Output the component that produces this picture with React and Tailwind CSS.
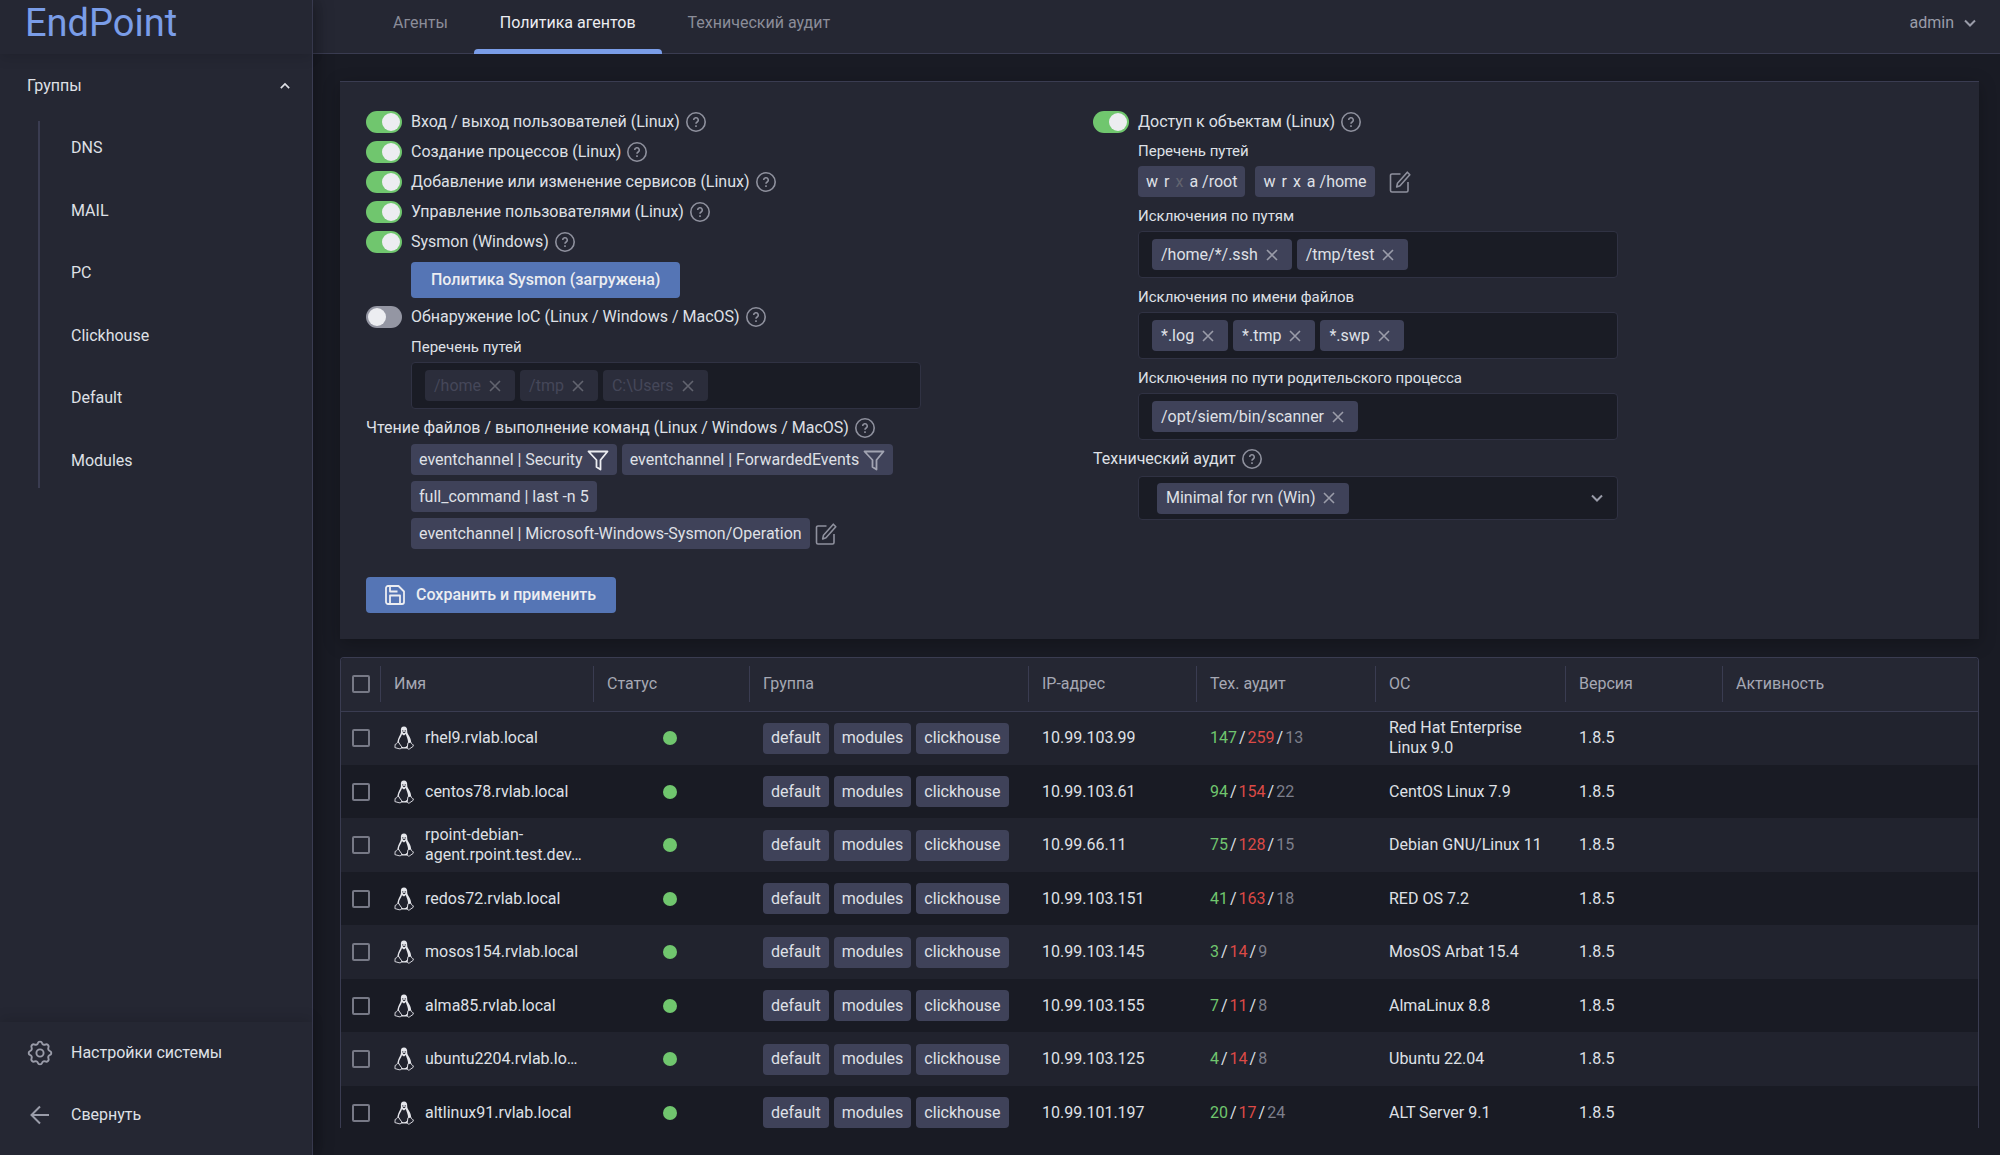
import { useState } from 'react'

const groups = ['DNS', 'MAIL', 'PC', 'Clickhouse', 'Default', 'Modules']

const tabs = ['Агенты', 'Политика агентов', 'Технический аудит']

const leftToggles = [
    'Вход / выход пользователей (Linux)',
    'Создание процессов (Linux)',
    'Добавление или изменение сервисов (Linux)',
    'Управление пользователями (Linux)',
    'Sysmon (Windows)'
]

const columns = ['Имя', 'Статус', 'Группа', 'IP-адрес', 'Тех. аудит', 'ОС', 'Версия', 'Активность']

const agents = [
    { name: 'rhel9.rvlab.local', ip: '10.99.103.99', audit: [147, 259, 13], os: 'Red Hat Enterprise Linux 9.0' },
    { name: 'centos78.rvlab.local', ip: '10.99.103.61', audit: [94, 154, 22], os: 'CentOS Linux 7.9' },
    { name: 'rpoint-debian-agent.rpoint.test.dev…', ip: '10.99.66.11', audit: [75, 128, 15], os: 'Debian GNU/Linux 11' },
    { name: 'redos72.rvlab.local', ip: '10.99.103.151', audit: [41, 163, 18], os: 'RED OS 7.2' },
    { name: 'mosos154.rvlab.local', ip: '10.99.103.145', audit: [3, 14, 9], os: 'MosOS Arbat 15.4' },
    { name: 'alma85.rvlab.local', ip: '10.99.103.155', audit: [7, 11, 8], os: 'AlmaLinux 8.8' },
    { name: 'ubuntu2204.rvlab.lo…', ip: '10.99.103.125', audit: [4, 14, 8], os: 'Ubuntu 22.04' },
    { name: 'altlinux91.rvlab.local', ip: '10.99.101.197', audit: [20, 17, 24], os: 'ALT Server 9.1' }
]

function Chevron({ up }) {
    return (
        <svg className={up === undefined ? 'h-3 w-3' : up ? 'h-2.5 w-2.5 rotate-180' : 'h-2.5 w-2.5'} viewBox="0 0 12 12" fill="none" stroke="currentColor" strokeWidth="2">
            <path d="M1 3.5l5 5 5-5" />
        </svg>
    )
}

function CrossIcon() {
    return (
        <svg className="h-3 w-3" viewBox="0 0 12 12" fill="none" stroke="currentColor" strokeWidth="1.6">
            <path d="M1 1l10 10M11 1L1 11" />
        </svg>
    )
}

function HelpIcon() {
    return (
        <button type="button" aria-label="Справка" className="text-[#8f919e]">
            <svg className="h-5 w-5" viewBox="0 0 20 20" fill="none" stroke="currentColor" strokeWidth="1.6">
                <circle cx="10" cy="10" r="9.2" />
                <path d="M7.7 8.1a2.3 2.3 0 1 1 3.5 1.9c-.8.5-1.2.9-1.2 1.8" />
                <path d="M10 13.2v1.8" />
            </svg>
        </button>
    )
}

function EditIcon() {
    return (
        <button type="button" aria-label="Изменить" className="text-[#8f919e]">
            <svg className="h-[22px] w-[22px]" viewBox="0 0 22 22" fill="none" stroke="currentColor" strokeWidth="1.6" strokeLinejoin="round">
                <path d="M11.5 3H3a1.5 1.5 0 0 0-1.5 1.5v15A1.5 1.5 0 0 0 3 21h14.5a1.5 1.5 0 0 0 1.5-1.5V11" />
                <path d="M18.3 1.2l2.5 2.5-9.8 11-3.3 1.3.8-3.8z" />
            </svg>
        </button>
    )
}

function FilterIcon({ active }) {
    return (
        <svg className={active ? 'h-[22px] w-[22px] text-[#ecedf1]' : 'h-[22px] w-[22px] text-[#a2a4b2]'} viewBox="0 0 22 22" fill="none" stroke="currentColor" strokeWidth="1.8" strokeLinejoin="round">
            <path d="M1.5 2.5h19l-7 8.5v9.5l-4-2.5v-7z" />
        </svg>
    )
}

function Tux() {
    return (
        <svg className="h-6 w-5 shrink-0" viewBox="0 0 20 24">
            <path fill="#e6e7ec" d="M6.9 5C6.6 2 7.8.6 10 .6s3.400 1.600 3.200 4.300c-.1 2 1 3.200 2.200 5.500 1.100 2.100 2 4.400 1.700 7.300l-2 4.800H5L3.600 16.500c-.3-2.800 1.400-5.400 2.500-7.700.7-1.600.9-2.300.8-3.800z" />
            <path fill="#20222d" d="M8 8.300l2 1.200 1.800-1.500c.7 2.400 2.300 5.500 2.300 8.500 0 3-1.900 4.800-4.300 4.800-1.900 0-3-1-4-3l-.9-2.500c.1-3 2.200-4.800 3.100-7.500z" />
            <path fill="#20222d" d="M8.300 4.200h1v1.200h-1zM10.700 4.200h1v1.200h-1zM8.600 6.300l1.400-.5 1.700.5L10 7.300z" />
            <path fill="#20222d" stroke="#e6e7ec" strokeWidth=".9" strokeLinejoin="round" d="M4 15.700l3.500 4.800c.3 1.500-.7 2.500-2.200 2.300L.9 21.600l.3-3.300c1.600 0 1.900-1.600 2.800-2.600zM13.900 16.800l3-.7c.2 1.500 1 2.100 2.400 2.700l-.2 1.600-3.600 2.500c-1.200.6-2.200 0-2.200-1.500z" />
        </svg>
    )
}

function GearIcon() {
    return (
        <svg className="h-[26px] w-[26px]" viewBox="0 0 26 26" fill="none" stroke="currentColor" strokeWidth="1.9" strokeLinejoin="round">
            <path d="M10.8 3.3a2.300 2.300 0 0 1 4.400 0 2.300 2.300 0 0 0 3.100 1.300 2.300 2.300 0 0 1 3.100 3.100 2.300 2.300 0 0 0 1.300 3.100 2.300 2.300 0 0 1 0 4.400 2.300 2.300 0 0 0-1.300 3.100 2.300 2.300 0 0 1-3.100 3.100 2.300 2.300 0 0 0-3.100 1.300 2.300 2.300 0 0 1-4.400 0 2.300 2.300 0 0 0-3.100-1.300 2.300 2.300 0 0 1-3.100-3.100 2.300 2.300 0 0 0-1.300-3.100 2.300 2.300 0 0 1 0-4.400 2.300 2.300 0 0 0 1.300-3.100 2.300 2.300 0 0 1 3.100-3.100 2.300 2.300 0 0 0 3.100-1.300z" />
            <circle cx="13" cy="13" r="3.6" />
        </svg>
    )
}

function Toggle({ label, defaultChecked = true }) {
    return (
        <div className="flex h-[30px] items-center gap-1.5">
            <label className="flex items-center gap-[9px]">
                <input type="checkbox" role="switch" defaultChecked={defaultChecked} className="peer sr-only" />
                <span className="flex h-[22px] w-9 items-center rounded-full bg-[#9496a3] p-0.5 peer-checked:justify-end peer-checked:bg-[#70c66e]">
                    <span className="h-[18px] w-[18px] rounded-full bg-[#ecedf1]"></span>
                </span>
                {label}
            </label>
            <HelpIcon />
        </div>
    )
}

function Tag({ children }) {
    return <span className="flex h-[31px] items-center gap-1 rounded bg-[#3f4259] px-2">{children}</span>
}

function ChipField({ id, items, disabled }) {
    return (
        <div className="flex h-[47px] items-center gap-[5px] rounded-sm border border-[#303243] bg-[#1a1c25] px-[13px]">
            {items.map(item => (
                <span
                    key={item}
                    className={`flex h-[31px] items-center gap-2 rounded pr-3.5 pl-[9px] ${disabled ? 'bg-[#2b2d3b] text-[#454759]' : 'bg-[#3f4259]'}`}
                >
                    {item}
                    <button type="button" disabled={disabled} aria-label={`Удалить ${item}`} className={disabled ? 'text-[#62646f]' : 'text-[#9a9ca9]'}>
                        <CrossIcon />
                    </button>
                </span>
            ))}
            <input id={id} disabled={disabled} className="min-w-0 flex-1 bg-transparent outline-none" />
        </div>
    )
}

function Field({ id, label, items, disabled }) {
    return (
        <div>
            <label htmlFor={id} className="flex h-[30px] items-center text-[15px]">{label}</label>
            <ChipField id={id} items={items} disabled={disabled} />
        </div>
    )
}

function PathTag({ path, off = '' }) {
    return (
        <Tag>
            <span className="flex gap-1.5">
                {['w', 'r', 'x', 'a'].map(flag => (
                    <span key={flag} className={off.includes(flag) ? 'text-[#62646f]' : ''}>{flag}</span>
                ))}
            </span>
            {path}
        </Tag>
    )
}

function Check({ label }) {
    return (
        <input
            type="checkbox"
            aria-label={label}
            className="block h-[18px] w-[18px] appearance-none rounded-xs border-2 border-[#777986] checked:bg-[#7a9de8]"
        />
    )
}

function Sidebar() {
    const [open, setOpen] = useState(true)

    return (
        <aside className="z-10 flex w-[313px] shrink-0 flex-col border-r border-[#3a3c51] bg-[#252733] shadow-[4px_0_16px_rgba(0,0,0,0.25)]">
            <div className="flex h-[54px] shrink-0 items-start px-[25px] text-[38px] leading-[46px] text-[#7a9de8] shadow-[0_4px_12px_rgba(0,0,0,0.12)]">
                EndPoint
            </div>
            <button type="button" onClick={() => setOpen(!open)} className="flex h-16 items-center justify-between pr-[22px] pl-[27px]">
                Группы
                <Chevron up={open} />
            </button>
            {open && (
                <nav className="mt-[3px] ml-[38px] flex h-[367px] flex-col justify-between border-l-2 border-[#3a3c51]">
                    {groups.map(group => (
                        <a key={group} href="#" className="flex h-[54px] items-center pl-[31px]">{group}</a>
                    ))}
                </nav>
            )}
            <div className="mt-auto flex flex-col pb-[9px] shadow-[0_-4px_12px_rgba(0,0,0,0.12)]">
                <button type="button" className="flex h-[62px] items-center gap-[18px] pl-[27px]">
                    <span className="text-[#9a9ca9]"><GearIcon /></span>
                    Настройки системы
                </button>
                <button type="button" className="flex h-[62px] items-center gap-[18px] pl-[27px]">
                    <svg className="h-[26px] w-[26px] text-[#9a9ca9]" viewBox="0 0 26 26" fill="none" stroke="currentColor" strokeWidth="2">
                        <path d="M22 13H5M13 4.5L4.5 13l8.5 8.5" />
                    </svg>
                    Свернуть
                </button>
            </div>
        </aside>
    )
}

function Header() {
    return (
        <header className="flex h-[54px] shrink-0 justify-between border-b border-[#3a3c51] bg-[#252733] pr-6 pl-[54px]">
            <nav className="flex">
                {tabs.map((tab, idx) => (
                    <a
                        key={tab}
                        href="#"
                        className={`h-[54px] px-[26px] pt-[11px] ${idx === 1 ? 'relative text-[#ecedf1]' : 'text-[#8b8d99]'}`}
                    >
                        {tab}
                        {idx === 1 && <span className="absolute inset-x-0 bottom-0 h-[5px] rounded-t-sm bg-[#7a9de8]"></span>}
                    </a>
                ))}
            </nav>
            <button type="button" className="flex h-[46px] items-center gap-2.5 text-[#9a9ca9]">
                admin
                <Chevron />
            </button>
        </header>
    )
}

function Policy() {
    return (
        <section className="grid grid-cols-[727fr_860fr] border-t border-[#3a3c51] bg-[#252733] px-[26px] pt-[25px] pb-[26px] shadow-[0_4px_16px_rgba(0,0,0,0.25)]">
            <div>
                {leftToggles.map(label => (
                    <Toggle key={label} label={label} />
                ))}
                <div className="flex pt-[5px] pb-1 pl-[45px]">
                    <button type="button" className="h-9 rounded-sm bg-[#5575b5] px-5 font-medium text-[#ecedf1]">
                        Политика Sysmon (загружена)
                    </button>
                </div>
                <Toggle label="Обнаружение IoC (Linux / Windows / MacOS)" defaultChecked={false} />
                <div className="max-w-[555px] pl-[45px]">
                    <Field id="ioc-paths" label="Перечень путей" items={['/home', '/tmp', 'C:\\Users']} disabled />
                </div>
                <div className="mt-1 flex h-[30px] items-center gap-1.5">
                    Чтение файлов / выполнение команд (Linux / Windows / MacOS)
                    <HelpIcon />
                </div>
                <div className="mt-px flex max-w-[555px] flex-wrap gap-x-[5px] gap-y-1.5 pl-[45px]">
                    <Tag>eventchannel | Security <FilterIcon active /></Tag>
                    <Tag>eventchannel | ForwardedEvents <FilterIcon /></Tag>
                    <div className="flex w-full">
                        <Tag>full_command | last -n 5</Tag>
                    </div>
                    <Tag>eventchannel | Microsoft-Windows-Sysmon/Operation</Tag>
                    <EditIcon />
                </div>
                <button type="button" className="mt-7 flex h-9 items-center gap-2.5 rounded-sm bg-[#5575b5] pr-5 pl-[18px] font-medium text-[#ecedf1]">
                    <svg className="h-[22px] w-[22px]" viewBox="0 0 22 22" fill="none" stroke="currentColor" strokeWidth="1.8" strokeLinejoin="round">
                        <path d="M4 2h10.5L20 7.5V18a2 2 0 0 1-2 2H4a2 2 0 0 1-2-2V4a2 2 0 0 1 2-2z" />
                        <path d="M6 20v-8.5h10V20M6 2.5v5h7.5" />
                    </svg>
                    Сохранить и применить
                </button>
            </div>
            <div>
                <Toggle label="Доступ к объектам (Linux)" />
                <div className="flex max-w-[525px] flex-col gap-1 pl-[45px]">
                    <div>
                        <div className="flex h-[29px] items-center text-[15px]">Перечень путей</div>
                        <div className="flex items-center gap-2.5">
                            <PathTag path="/root" off="x" />
                            <PathTag path="/home" />
                            <span className="flex pl-1"><EditIcon /></span>
                        </div>
                    </div>
                    <Field id="skip-paths" label="Исключения по путям" items={['/home/*/.ssh', '/tmp/test']} />
                    <Field id="skip-files" label="Исключения по имени файлов" items={['*.log', '*.tmp', '*.swp']} />
                    <Field id="skip-parents" label="Исключения по пути родительского процесса" items={['/opt/siem/bin/scanner']} />
                </div>
                <div className="mt-1 mb-0.5 flex h-[30px] items-center gap-1.5">
                    Технический аудит
                    <HelpIcon />
                </div>
                <div className="max-w-[525px] pl-[45px]">
                    <div className="flex h-11 items-center justify-between rounded-sm border border-[#303243] bg-[#1a1c25] pr-3.5 pl-[18px] text-[#9a9ca9]">
                        <span className="flex h-[31px] items-center gap-2 rounded bg-[#3f4259] pr-3.5 pl-[9px]">
                            <span className="text-[#dfe0e6]">Minimal for rvn (Win)</span>
                            <button type="button" aria-label="Удалить Minimal for rvn (Win)"><CrossIcon /></button>
                        </span>
                        <button type="button" aria-label="Открыть список"><Chevron /></button>
                    </div>
                </div>
            </div>
        </section>
    )
}

function AgentsTable() {
    return (
        <section className="min-h-0 flex-1 overflow-hidden rounded-t border border-b-0 border-[#3a3c51]">
            <table className="w-full table-fixed border-collapse text-left">
                <colgroup>
                    <col className="w-[39px]" />
                    <col className="w-[213px]" />
                    <col className="w-[156px]" />
                    <col className="w-[279px]" />
                    <col className="w-[168px]" />
                    <col className="w-[179px]" />
                    <col className="w-[190px]" />
                    <col className="w-[157px]" />
                    <col />
                </colgroup>
                <thead>
                    <tr className="h-[53px] border-b border-[#3a3c51] bg-[#252733] text-[#a6a8b4]">
                        <th className="p-0 pl-[11px]"><Check label="Выбрать все" /></th>
                        {columns.map(column => (
                            <th key={column} className="p-0 font-normal">
                                <div className="flex h-9 items-center border-l border-[#3a3c51] pl-[13px]">{column}</div>
                            </th>
                        ))}
                    </tr>
                </thead>
                <tbody>
                    {agents.map(({ name, ip, audit, os }) => (
                        <tr key={ip} className="h-[54px] bg-[#191b24] odd:bg-[#21232e] even:h-[53px]">
                            <td className="p-0 pl-[11px]"><Check label={name} /></td>
                            <td className="p-0 pl-3.5">
                                <div className="flex items-center gap-[11px] leading-5">
                                    <Tux />
                                    <span className="w-[154px]">{name}</span>
                                </div>
                            </td>
                            <td className="p-0 pr-0.5"><div className="mx-auto h-3.5 w-3.5 rounded-full bg-[#70c66e]"></div></td>
                            <td className="p-0 pl-3.5">
                                <div className="flex gap-[5px]">
                                    <Tag>default</Tag>
                                    <Tag>modules</Tag>
                                    <Tag>clickhouse</Tag>
                                </div>
                            </td>
                            <td className="p-0 pl-3.5">{ip}</td>
                            <td className="p-0 pl-3.5">
                                <span className="flex gap-0.5">
                                    <span className="text-[#70c66e]">{audit[0]}</span>/
                                    <span className="text-[#dc4a46]">{audit[1]}</span>/
                                    <span className="text-[#7d7f8b]">{audit[2]}</span>
                                </span>
                            </td>
                            <td className="p-0 pr-5 pl-3.5 leading-5">{os}</td>
                            <td className="p-0 pl-3.5">1.8.5</td>
                            <td></td>
                        </tr>
                    ))}
                </tbody>
            </table>
        </section>
    )
}

export default function App() {
    return (
        <div className="flex h-screen overflow-hidden bg-[#191b24] font-['Roboto',sans-serif] text-base text-[#dfe0e6]">
            <Sidebar />
            <div className="flex min-w-0 flex-1 flex-col">
                <Header />
                <main className="flex min-h-0 flex-1 flex-col gap-[18px] pt-[27px] pr-[21px] pb-[27px] pl-[27px]">
                    <Policy />
                    <AgentsTable />
                </main>
            </div>
        </div>
    )
}
